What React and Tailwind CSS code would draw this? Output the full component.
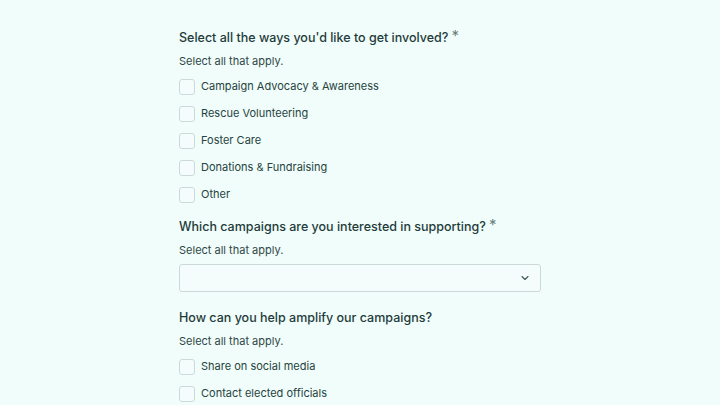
import React from "react";

const Checkbox = ({ label }) => (
  <label className="flex items-center gap-[6px] h-[27px] cursor-pointer">
    <span className="w-[16px] h-[16px] rounded-[3px] border border-[#cbdad9] bg-[#f4fdfc] shrink-0"></span>
    <span className="text-[11px] text-[#27433f]">{label}</span>
  </label>
);

const Question = ({ title, required }) => (
  <h2 className="h-[18px] text-[12.5px] font-medium text-[#1f3b3a] flex items-start leading-[18px]">
    {title}
    {required && <span className="ml-[3px] mt-[1px] text-[#6b7f7e] text-[15px] leading-[12px] font-normal">*</span>}
  </h2>
);

const Hint = () => (
  <p className="text-[11px] leading-[16px] text-[#2f4746] mt-[6px]">Select all that apply.</p>
);

export default function App() {
  return (
    <div className="min-h-screen bg-[#f0fdfa] font-['Inter',sans-serif]">
      <div className="w-[362px] mx-auto pt-[29px]">
        <Question title="Select all the ways you'd like to get involved?" required />
        <Hint />
        <div className="flex flex-col mt-[4px]">
          <Checkbox label="Campaign Advocacy & Awareness" />
          <Checkbox label="Rescue Volunteering" />
          <Checkbox label="Foster Care" />
          <Checkbox label="Donations & Fundraising" />
          <Checkbox label="Other" />
        </div>

        <div className="mt-[10px]">
          <Question title="Which campaigns are you interested in supporting?" required />
          <Hint />
          <button className="mt-[6px] w-full h-[28px] rounded-[3px] border border-[#cbdad9] bg-[#f4fdfc] flex items-center justify-end pr-[9px]">
            <svg width="12" height="12" viewBox="0 0 24 24" fill="none" stroke="#3f5655" strokeWidth="2.2" strokeLinecap="round" strokeLinejoin="round">
              <path d="m6 9 6 6 6-6" />
            </svg>
          </button>
        </div>

        <div className="mt-[17px]">
          <Question title="How can you help amplify our campaigns?" />
          <Hint />
          <div className="flex flex-col mt-[4px]">
            <Checkbox label="Share on social media" />
            <Checkbox label="Contact elected officials" />
          </div>
        </div>
      </div>
    </div>
  );
}
